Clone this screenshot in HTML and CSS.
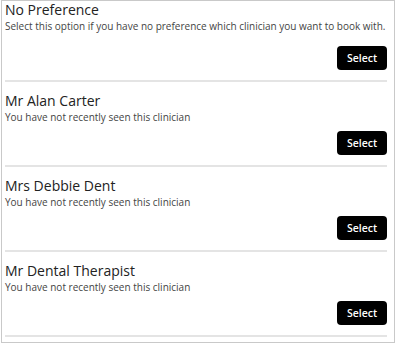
FILE: index.html
```html
<!DOCTYPE html>
<html lang="en">
<head>
<meta charset="utf-8">
<title>Select clinician</title>
<link rel="stylesheet" href="styles.css">
</head>
<body>
<div class="panel">
  <div class="row row-first">
    <h2 class="name">No Preference</h2>
    <p class="desc">Select this option if you have no preference which clinician you want to book with.</p>
    <div class="actions"><button class="select-btn">Select</button></div>
  </div>
  <div class="row">
    <h2 class="name">Mr Alan Carter</h2>
    <p class="desc">You have not recently seen this clinician</p>
    <div class="actions"><button class="select-btn">Select</button></div>
  </div>
  <div class="row">
    <h2 class="name">Mrs Debbie Dent</h2>
    <p class="desc">You have not recently seen this clinician</p>
    <div class="actions"><button class="select-btn">Select</button></div>
  </div>
  <div class="row">
    <h2 class="name">Mr Dental Therapist</h2>
    <p class="desc">You have not recently seen this clinician</p>
    <div class="actions"><button class="select-btn">Select</button></div>
  </div>
</div>
</body>
</html>
```
FILE: styles.css
```css
html, body {
  margin: 0;
  padding: 0;
  background: #fff;
}
body {
  font-family: "Open Sans", "Liberation Sans", sans-serif;
}
.panel {
  box-sizing: border-box;
  margin-left: 1px;
  width: 394px;
  height: 343px;
  border: 1px solid #c9c9c9;
  padding: 0 7px 0 3px;
}
.row {
  display: flex;
  flex-direction: column;
  padding: 10px 0 10px;
  border-bottom: 2px solid #e4e4e4;
}
.row-first {
  padding-top: 0;
}
.name {
  margin: 0;
  font-size: 14px;
  line-height: 18px;
  font-weight: 400;
  color: #222;
}
.desc {
  margin: 0;
  font-size: 10px;
  line-height: 15px;
  color: #444;
}
.actions {
  display: flex;
  justify-content: flex-end;
  margin-top: 6px;
}
.row-first .actions {
  margin-top: 12px;
}
.select-btn {
  width: 50px;
  height: 24px;
  border: 0;
  border-radius: 4px;
  background: #000;
  color: #fff;
  font-family: "Open Sans", "Liberation Sans", sans-serif;
  font-size: 10.5px;
  font-weight: 600;
  padding: 0;
}
```
